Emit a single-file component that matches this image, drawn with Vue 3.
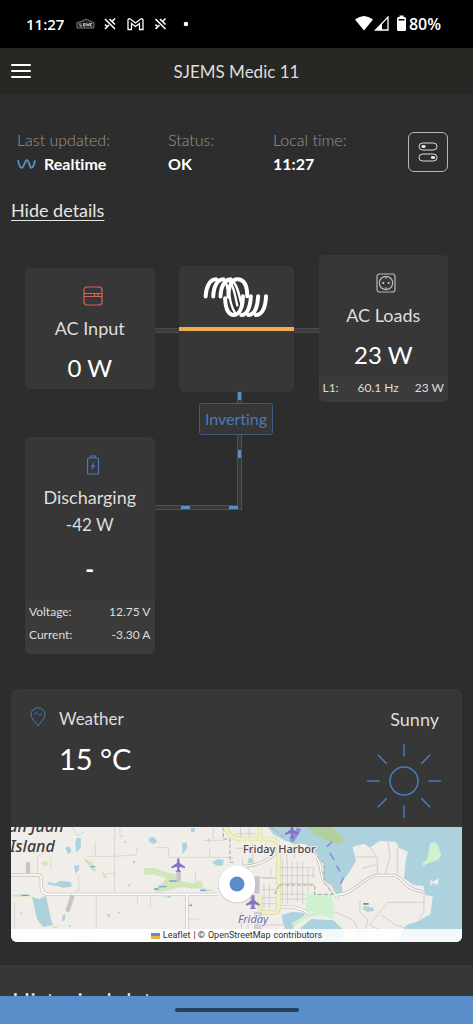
<script setup>
const summary = [
  { label: 'Last updated:', value: 'Realtime', live: true },
  { label: 'Status:', value: 'OK' },
  { label: 'Local time:', value: '11:27' },
]

const loads = [{ phase: 'L1:', frequency: '60.1 Hz', power: '23 W' }]

const battery = [
  { label: 'Voltage:', value: '12.75 V' },
  { label: 'Current:', value: '-3.30 A' },
]

const rays = [0, 45, 90, 135, 180, 225, 270, 315]
</script>

<template>
  <div class="screen">
    <div class="status-bar">
      <span class="clock">11:27</span>
      <svg class="tray" width="114" height="16" viewBox="0 0 114 16" aria-hidden="true">
        <path d="M1 6.500 L5 5.500 L10 3 L15 5.500 L18 6.500 V12 H1 Z" fill="#222" stroke="#777" />
        <path d="M4 7v3h2M7.500 7.500h1.500v2.500h-1.500zM10.500 7l.7 3 .8-2 .8 2 .7-3M16 7.500h-1.500v2.500H16" fill="none" stroke="#bbb" />
        <g fill="none" stroke="#fff" stroke-width="1.600">
          <path d="M29 3 L39 13 M33.500 3 L39 8.500 M39 2.500 L36 5.500 M29 13 L33 9 M29 8.500 L31 10.500" />
          <path d="M79.500 3 L89.500 13 M84 3 L89.500 8.500 M89.500 2.500 L86.500 5.500 M79.500 13 L83.500 9 M79.500 8.500 L81.500 10.500" />
        </g>
        <path d="M52 13.500 V4.500 Q52 2.500 54 2.800 L59.500 7 L65 2.800 Q67 2.500 67 4.500 V13.500 H63.500 V7.500 L59.500 10.500 L55.500 7.500 V13.500 Z" fill="none" stroke="#fff" stroke-width="1.300" />
        <circle cx="110" cy="8" r="2.300" fill="#fff" />
      </svg>
      <svg class="signals" width="52" height="18" viewBox="0 0 52 18" aria-hidden="true">
        <path d="M0 4.500 Q9 -2.500 18 4.500 L9 15.500 Z" fill="#fff" />
        <path d="M33 2 V15 H20.500 Z" fill="none" stroke="#fff" stroke-width="1.300" />
        <path d="M27 8.500 V15 H20.500 Z" fill="#fff" />
        <rect x="42" y="2" width="9" height="14" rx="1.500" fill="#fff" />
        <rect x="44.500" y="0.500" width="4" height="2" fill="#fff" />
        <rect x="43.500" y="4" width="6" height="1.500" fill="#000" />
      </svg>
      <span class="charge">80%</span>
    </div>

    <header class="top-bar">
      <button class="menu" aria-label="Menu">
        <span></span><span></span><span></span>
      </button>
      <h1>SJEMS Medic 11</h1>
    </header>

    <main>
      <section class="summary">
        <div v-for="item in summary" :key="item.label" class="fact">
          <span class="fact-label">{{ item.label }}</span>
          <span class="fact-value">
            <svg v-if="item.live" width="19" height="12" viewBox="0 0 20 12" aria-hidden="true">
              <path d="M1 2 C2 7 3.500 10 5 10 C7.500 10 8 2 10.500 2 C13 2 13 10 15 10 C17 10 18 7 19 2" />
            </svg>
            {{ item.value }}
          </span>
        </div>
        <button class="controls" aria-label="Device controls">
          <svg width="20" height="20" viewBox="0 0 20 20" aria-hidden="true">
            <rect x="1" y="1" width="18" height="7" rx="3.500" />
            <rect x="1" y="12" width="18" height="7" rx="3.500" />
            <rect class="knob" x="3.500" y="3.300" width="4" height="2.500" rx="1" />
            <rect class="knob" x="13" y="14.300" width="4" height="2.500" rx="1" />
          </svg>
        </button>
      </section>

      <a class="details-link" href="#details">Hide details</a>

      <section id="details" class="flow">
        <article class="card ac-input">
          <svg class="card-icon red" width="20" height="20" viewBox="0 0 20 20" aria-hidden="true">
            <rect x="1" y="1" width="18" height="18" rx="3" />
            <path d="M1 7.500h18M1 10.500h18M11.500 7.500v3M15 7.500v3" />
          </svg>
          <h2>AC Input</h2>
          <strong>0 W</strong>
        </article>

        <div class="wire"></div>

        <article class="card inverter">
          <svg class="logo" width="66" height="42" viewBox="116 61 200 127" aria-hidden="true">
            <path d="M124 123 C125 95 136 71 156 71" />
            <path d="M147 123 C148 95 158 71 178 71" />
            <path d="M169 123 C170 95 180 71 200 71" />
            <path d="M193 123 C193 92 203 71 220 71 C241 71 250 92 250 122" />
            <path class="fine" d="M178 71 C190 75 187 100 196 128 M190 73 C209 84 212 118 220 150 M205 76 C220 88 226 118 232 145" />
            <path d="M183 128 C184 158 192 179 210 179 C227 179 237 154 237 122" />
            <path class="fine" d="M194 98 C196 132 203 158 214 174" />
            <path d="M261 122 C260 154 250 179 232 179" />
            <path d="M283 122 C282 154 272 179 253 179" />
            <path d="M307 122 C306 154 296 179 276 179" />
          </svg>
          <div class="bar"></div>
        </article>

        <div class="wire"></div>

        <article class="card ac-loads">
          <svg class="card-icon grey" width="20" height="20" viewBox="0 0 20 20" aria-hidden="true">
            <rect x="1" y="1" width="18" height="18" rx="2.500" />
            <circle cx="10" cy="10" r="6.700" />
            <path d="M10 3.300v2.500M10 14.200v2.500" />
            <circle class="dot" cx="7.300" cy="10" r="1" />
            <circle class="dot" cx="12.700" cy="10" r="1" />
          </svg>
          <h2>AC Loads</h2>
          <strong>23 W</strong>
          <div class="readings phases">
            <div v-for="row in loads" :key="row.phase" class="reading">
              <span class="phase">{{ row.phase }}</span>
              <span>{{ row.frequency }}</span>
              <span>{{ row.power }}</span>
            </div>
          </div>
        </article>

        <article class="card battery">
          <svg class="card-icon blue" width="20" height="20" viewBox="0 0 20 20" aria-hidden="true">
            <path d="M5.500 3h9a1 1 0 0 1 1 1v14a1 1 0 0 1-1 1h-9a1 1 0 0 1-1-1V4a1 1 0 0 1 1-1zM7.500 3V1h5v2" />
            <path class="bolt" d="M11.500 6.500 7.500 11.700h2.200L8.500 15.500l4-5.200h-2.200z" />
          </svg>
          <h2>Discharging</h2>
          <p>-42 W</p>
          <strong>-</strong>
          <div class="readings cells">
            <div v-for="row in battery" :key="row.label" class="reading">
              <span>{{ row.label }}</span>
              <span>{{ row.value }}</span>
            </div>
          </div>
        </article>

        <svg class="elbow" width="139" height="119" viewBox="0 0 139 119" aria-hidden="true">
          <path class="edge" d="M84.500 0V116.500H0" />
          <path class="core" d="M84.500 0V116.500H0" />
          <path class="pulse" d="M84.500 1v8M84.500 59v8M83 116.500h-9M35 116.500h-9" />
        </svg>
        <span class="mode">Inverting</span>
      </section>

      <section class="weather">
        <div class="forecast">
          <svg class="pin" width="16" height="20" viewBox="0 0 16 20" aria-hidden="true">
            <path d="M8 19 C6 15.500 1 11.500 1 7.500 A7 6.700 0 0 1 15 7.500 C15 11.500 10 15.500 8 19 Z" />
            <path d="M4.500 7.500 C5.500 4.800 7 5.500 8 7.200 S10.500 9 11.500 6.500" />
          </svg>
          <div class="now">
            <h2>Weather</h2>
            <strong>15 °C</strong>
          </div>
          <div class="sky">
            <span>Sunny</span>
            <svg width="74" height="74" viewBox="0 0 74 74" aria-hidden="true">
              <circle cx="37" cy="37" r="14" />
              <path v-for="angle in rays" :key="angle" d="M37 12.500V0" :transform="`rotate(${angle} 37 37)`" />
            </svg>
          </div>
        </div>

        <div class="map">
          <svg class="tiles" viewBox="0 0 451 115" preserveAspectRatio="xMidYMid slice" role="img" aria-label="Map">
            <rect width="451" height="115" fill="#f1eee9" />
            <g transform="scale(.3333) translate(-33 -36)">
              <g fill="#acd2de">
                <path d="M96 245 L118 252 138 242 144 270 152 310 160 330 130 336 112 315 106 290Z" />
                <path d="M142 200 L165 206 180 197 212 201 216 214 190 219 175 214 145 209Z" />
                <path d="M230 68 L243 70 242 98 228 112 226 85Z" />
                <path d="M222 152 L238 150 236 166 226 176Z" />
                <path d="M446 68 L462 66 472 80 460 88 448 80Z" />
                <path d="M636 142 L655 132 672 136 668 152 650 152Z" />
                <path d="M572 40 L586 38 584 50 574 52Z M546 85 L560 82 562 98 548 118Z" />
                <path d="M196 98l14-4 4 16-10 8zM188 300l8-4-2 20-8 4zM322 298l8-2-4 14zM352 290l8 0-2 8zM570 265l8 2-6 8zM622 74l8-4-4 14zM380 210l12-2-4 8zM500 240l16 4-12 6z" />
                <path d="M60 292l8 2-6 6zM46 80l10 2-8 6zM372 78l8 0-6 8zM398 138l10 2-8 6zM206 330l8 2-6 6zM650 220l10-4 4 8z" />
              </g>
              <g fill="#cfe6ba">
                <path d="M250 130 L275 140 288 165 280 172 264 150Z M304 166l12 10 6 14-10-2zM122 142l18-4 4 12-16 2z" />
                <path d="M432 160 L465 158 490 170 525 176 540 198 580 205 600 195 612 216 590 222 545 216 510 226 475 232 460 226 480 210 500 190 460 178 434 180Z" />
                <path d="M36 240 L80 236 100 244 86 244 40 246Z M150 336l28-4-10 8zM216 228l20-2-6 6zM600 218l44 8-30 4zM484 242l20 0-8 6z" />
              </g>
              <path d="M272 155h14M508 198h24M476 215h24M462 222h14M600 226h18M64 241h22M566 271h10" stroke="#7da0d8" stroke-width="4" />
              <g fill="none" stroke="#dad6d2" stroke-width="3">
                <path d="M344 36V232M218 36L232 62 252 52M262 124H344L408 120 412 96M470 98H506V127H700M629 127V98M610 76H670M289 236V342M412 240V268M452 238V272L442 276M567 312H600M567 345H600M286 80V124M112 178V126L152 100M234 176L238 230M360 36V64H372M586 170V210M320 176H344M43 260V340M152 126V164M640 40V72" />
                <path d="M235 342V378M282 342V378H235" />
              </g>
              <g fill="none">
                <path d="M33 180H112Q124 180 124 192V218Q126 238 146 238H655M561 238V380" stroke="#cbc7c3" stroke-width="10" />
                <path d="M33 180H112Q124 180 124 192V218Q126 238 146 238H655M561 238V380" stroke="#fff" stroke-width="5" />
              </g>
              <path d="M84 142V176M218 240L202 290M536 168V200" stroke="#c9c4cc" stroke-width="13" />
              <path d="M670 36V72H690V142H700" fill="none" stroke="#aaa4a4" stroke-width="3" stroke-dasharray="12 6" />
              <path d="M675 36Q690 72 728 72" fill="none" stroke="#d8d9b0" stroke-width="14" />
              <path d="M675 36Q690 72 728 72" fill="none" stroke="#f0f0bd" stroke-width="10" />
              <path class="plane" d="M535 128 Q539 130 539 144 L555 155 V160 L539 155 L538 164 L544 170 H526 L532 164 L531 155 L514 160 V155 L531 144 Q531 130 535 128Z" />
            </g>

            <g transform="scale(.3333) translate(675 -36)">
              <path d="M96 36 L112 58 145 76 175 88 205 86 236 108 250 128 264 150 262 198 286 208 300 238 322 242 316 205 340 172 360 138 350 95 385 86 402 98 430 78 480 80 488 98 516 110 510 132 504 190 532 210 562 212 568 240 590 244 584 296 548 318 512 330 496 352 488 381 H690 V36Z" fill="#acd2de" />
              <path d="M384 272l28 6 2 10-20 2-14-8zM138 300l32-10 36 4-2 18-30 16-4 20-22-4-8-24zM190 342l36-30 66 4 36 34-10 31H210z" fill="#acd2de" />
              <path d="M582 192l8 8 18-10-2 20-16-6-6 10z" fill="#f1eee9" />
              <path d="M217 36 H285 L320 66 322 80 308 88 270 76 232 56Z" fill="#b4cf9e" />
              <path d="M582 86 Q594 78 604 86 L616 118 608 134 570 148 558 156 562 140 574 132Z" fill="#cff1cd" />
              <path d="M210 237H286L292 268 294 314 256 300 210 284ZM164 328L210 298 256 288 284 294 250 300 214 308 178 334Z" fill="#cff1cd" />
              <path d="M38 128l16 4-4 12-14 0z" fill="#acd8c6" />
              <path d="M382 264h16v5h-16z" fill="#5f8dc8" />
              <path d="M382 274l16 0-6 10z" fill="#c8dc9c" />
              <g fill="none" stroke="#d3cfcc" stroke-width="3">
                <path d="M14 36V72M40 36V74M0 100H72M20 128V210M36 146V206M0 188H122M50 84V150M90 84V100M104 160V180M140 132V268M154 138V266M168 138V242M184 140V260M200 140V268M216 160V234M134 158H236M134 182H238M134 206H232M134 238H210M134 252H210M152 120V140M176 92V130M232 162V190M80 190H120M84 206V280M100 206V280M76 224H122M76 248H122M76 266H122M0 56H60" />
                <path d="M404 98L424 128V176M360 126H424M456 80L462 124 448 178M484 98V176M424 148L378 160M372 258V290L396 316 380 378M440 280L400 330 430 345M440 280L456 262H566M436 300L480 330 520 342M294 290L350 314 366 342 374 378M564 226V290L550 312M144 340L110 378M16 290V378M36 300V380M60 330H140" />
              </g>
              <path d="M300 240 C350 240 380 190 420 181 H470 C500 180 495 220 560 230M24 154 C70 150 90 140 128 108M244 130 C264 160 244 196 284 214L304 250M134 276H170Q194 280 220 296" fill="none" stroke="#c6c2be" stroke-width="9" />
              <path d="M300 240 C350 240 380 190 420 181 H470 C500 180 495 220 560 230M24 154 C70 150 90 140 128 108M244 130 C264 160 244 196 284 214L304 250M134 276H170Q194 280 220 296" fill="none" stroke="#fff" stroke-width="4" />
              <path d="M12 72H104Q128 74 128 102V282Q126 292 112 292H72M72 36V72M72 240V286" fill="none" stroke="#d8d9b0" stroke-width="14" />
              <path d="M12 72H104Q128 74 128 102V282Q126 292 112 292H72M72 36V72M72 240V286" fill="none" stroke="#f0f0bd" stroke-width="10" />
              <path d="M130 210H236V238H292M106 36L150 70M116 238L130 210M230 108L264 146V200L290 238" fill="none" stroke="#aaa4a4" stroke-width="3" stroke-dasharray="12 6" />
              <path d="M64 184V236" stroke="#c9c4cc" stroke-width="14" />
              <path d="M66 290V380" stroke="#d3ced6" stroke-width="24" />
              <path d="M50 240V282" stroke="#c9c4cc" stroke-width="16" />
              <path d="M288 80L272 96M282 114L294 134M302 152L312 170M322 188L314 206" fill="none" stroke="#8b93d6" stroke-width="5" />
              <path d="M190 40L166 80" stroke="#8b93d6" stroke-width="14" />
              <path class="plane" transform="translate(-484 112)" d="M535 128 Q539 130 539 144 L555 155 V160 L539 155 L538 164 L544 170 H526 L532 164 L531 155 L514 160 V155 L531 144 Q531 130 535 128Z" />
              <path class="plane" transform="translate(-367 -100)" d="M535 128 Q539 130 539 144 L555 155 V160 L539 155 L538 164 L544 170 H526 L532 164 L531 155 L514 160 V155 L531 144 Q531 130 535 128Z" />
            </g>
            <text class="island" x="-11" y="5">San Juan</text>
            <text class="island" x="-1" y="25">Island</text>
            <text class="town" x="232" y="26">Friday Harbor</text>
            <text class="airport" x="227" y="96">Friday</text>
            <circle cx="226" cy="57.500" r="19" fill="#000" opacity=".15" />
            <circle cx="226" cy="57" r="18.500" fill="#fff" />
            <circle cx="226" cy="57" r="7.500" fill="#5a8ecb" />
          </svg>
          <div class="attribution">
            <svg width="9" height="6" viewBox="0 0 9 6" aria-hidden="true">
              <path d="M0 0h9v3H0z" fill="#5a8ecb" />
              <path d="M0 3h9v3H0z" fill="#f0af4c" />
            </svg>
            <a href="#leaflet">Leaflet</a> | © <a href="#osm">OpenStreetMap</a> contributors
          </div>
        </div>
      </section>

      <section class="history">
        <h2>Historical data</h2>
      </section>
    </main>

    <div class="gesture-bar"><span></span></div>
  </div>
</template>

<style>
body {
  margin: 0;
  background: #2d2d2d;
}
</style>

<style scoped>
* {
  box-sizing: border-box;
}

.screen {
  display: flex;
  flex-direction: column;
  height: 100vh;
  overflow: hidden;
  background: #2d2d2d;
  color: #dededc;
  font-family: Lato, "Open Sans", sans-serif;
  font-size: 18px;
  font-variant-ligatures: none;
}

h1,
h2,
p {
  margin: 0;
  font-size: 17px;
  font-weight: 400;
}

svg {
  display: block;
  flex: none;
}

button {
  padding: 0;
  background: none;
  cursor: pointer;
}

.status-bar {
  display: flex;
  flex: none;
  align-items: center;
  height: 48px;
  padding: 0 32px 0 26px;
  background: #000;
  color: #fff;
  font-family: "Open Sans", sans-serif;
  font-size: 15px;
  font-weight: 600;
}

.tray {
  margin-left: 12px;
}

.signals {
  margin-left: auto;
}

.charge {
  margin-left: 2px;
  font-size: 16px;
}

.top-bar {
  display: grid;
  flex: none;
  grid-template-columns: 20px 1fr 20px;
  align-items: center;
  height: 46px;
  padding: 0 11px;
  background: #282723;
}

.top-bar h1 {
  text-align: center;
}

.menu {
  display: grid;
  gap: 4px;
  border: 0;
}

.menu span {
  height: 2px;
  border-radius: 1px;
  background: #fff;
}

main {
  flex: 1;
  min-height: 0;
  overflow: hidden;
}

.summary {
  display: grid;
  grid-template-columns: 151fr 105fr 135fr 40px;
  align-items: center;
  padding: 34px 25px 0 17px;
}

.fact {
  display: grid;
  font-size: 16px;
  line-height: 24px;
}

.fact-label {
  color: #989896;
  font-weight: 300;
}

.fact-value {
  display: flex;
  gap: 8px;
  align-items: center;
  color: #fff;
  font-weight: 700;
}

.fact-value path {
  fill: none;
  stroke: #5a8ecb;
  stroke-width: 2;
}

.controls {
  display: grid;
  width: 40px;
  height: 40px;
  place-items: center;
  border: 1px solid #b5b5b5;
  border-radius: 6px;
}

.controls rect {
  fill: none;
  stroke: #dcdcda;
}

.controls .knob {
  fill: #fff;
  stroke: none;
}

.details-link {
  display: inline-block;
  margin: 22px 11px 0;
  color: #e6e6e4;
  line-height: 24px;
  text-underline-offset: 3px;
}

.flow {
  display: grid;
  grid-template-columns: 1fr 24px 115px 25px 1fr;
  align-items: center;
  padding: 33px 25px 0;
}

.card {
  overflow: hidden;
  padding-top: 18px;
  border-radius: 5px;
  background: #373737;
  text-align: center;
}

.card-icon {
  margin: 0 0 10px calc(50% - 7px);
  fill: none;
  stroke-width: 1.2;
}

.red {
  stroke: #dd6155;
}

.grey {
  stroke: #b8b8b6;
}

.grey .dot {
  fill: #d8d8d6;
  stroke: none;
}

.blue {
  stroke: #4a7abb;
}

.blue .bolt {
  fill: #4a7abb;
  stroke: none;
}

.card h2 {
  font-size: 18px;
  line-height: 24px;
}

.card p {
  line-height: 32px;
}

.card strong {
  display: block;
  margin-top: 12px;
  color: #fff;
  font-size: 24px;
  font-weight: 400;
  line-height: 32px;
}

.ac-input {
  padding-bottom: 5px;
}

.inverter {
  height: 126px;
  padding-top: 10px;
}

.logo {
  margin: 0 auto;
  fill: none;
  stroke: #fff;
  stroke-linecap: round;
  stroke-width: 12;
}

.logo .fine {
  stroke-width: 7;
}

.bar {
  height: 4px;
  margin-top: 9px;
  background: #eead50;
}

.wire {
  height: 5px;
  margin-top: 4px;
  border: 1px solid #4b4b4b;
  border-width: 1px 0;
  background: #3c3c3c;
}

.readings {
  padding: 0 4px;
  background: #3b3b3b;
  font-size: 12px;
}

.reading {
  display: flex;
  justify-content: space-between;
  white-space: nowrap;
}

.phases {
  margin-top: 5px;
  padding-bottom: 2px;
  line-height: 24px;
}

.phases .reading {
  gap: 16px;
}

.phase {
  flex: 1;
  text-align: left;
}

.battery {
  grid-row: 2;
  margin-top: 35px;
}

.battery strong {
  font-weight: 700;
}

.cells {
  margin-top: 15px;
  padding-bottom: 8px;
  line-height: 23px;
}

.elbow {
  grid-row: 2;
  grid-column: 2 / 4;
  align-self: start;
  margin-top: -11px;
  fill: none;
}

.edge {
  stroke: #505050;
  stroke-width: 5;
}

.core {
  stroke: #383838;
  stroke-width: 3;
}

.pulse {
  stroke: #5a8ecb;
  stroke-width: 3;
}

.mode {
  z-index: 1;
  grid-row: 2;
  grid-column: 3;
  align-self: start;
  justify-self: center;
  margin-top: 1px;
  padding: 0 5px;
  border: 1px solid #405a80;
  border-radius: 3px;
  background: #363636;
  color: #4a7abb;
  font-size: 16px;
  line-height: 30px;
}

.weather {
  overflow: hidden;
  margin: 35px 11px 23px;
  border-radius: 6px;
  background: #373737;
}

.forecast {
  display: flex;
  gap: 13px;
  padding: 17px 21px 9px 19px;
  line-height: 26px;
}

.pin {
  margin-top: 1px;
  fill: none;
  stroke: #4a7abb;
}

.now {
  flex: 1;
}

.now strong {
  display: block;
  margin-top: 9px;
  color: #fff;
  font-size: 29px;
  font-weight: 400;
  line-height: 36px;
}

.sky {
  display: grid;
  gap: 12px;
  justify-items: end;
}

.sky span {
  padding-right: 2px;
}

.sky svg {
  fill: none;
  stroke: #4a7abb;
  stroke-width: 1.5;
}

.map {
  display: grid;
}

.tiles {
  grid-area: 1 / 1;
  width: 100%;
  height: 115px;
}

.plane {
  fill: #8a70c4;
}

.tiles text {
  font-family: "Noto Sans", sans-serif;
  stroke: #f1eee9;
  stroke-width: 2;
  paint-order: stroke;
}

.tiles .island {
  fill: #3c3c3c;
  font-size: 16px;
  font-style: italic;
  font-weight: 500;
}

.tiles .town {
  fill: #4e4a48;
  font-size: 11px;
  font-weight: 500;
}

.tiles .airport {
  fill: #7468c0;
  font-size: 11px;
  font-style: italic;
}

.attribution {
  display: flex;
  grid-area: 1 / 1;
  gap: 3px;
  align-items: center;
  align-self: end;
  justify-content: center;
  background: rgba(255, 255, 255, 0.85);
  color: #333;
  font-family: Roboto, sans-serif;
  font-size: 9px;
  line-height: 13px;
}

.attribution a {
  color: inherit;
  text-decoration: none;
}

.history {
  padding: 20px 12px;
  background: #373737;
}

.history h2 {
  font-size: 24px;
  line-height: 32px;
}

.gesture-bar {
  display: grid;
  flex: none;
  height: 28px;
  place-items: center;
  background: #5a8ecb;
}

.gesture-bar span {
  width: 124px;
  height: 4px;
  border-radius: 2px;
  background: #263f5d;
}
</style>
